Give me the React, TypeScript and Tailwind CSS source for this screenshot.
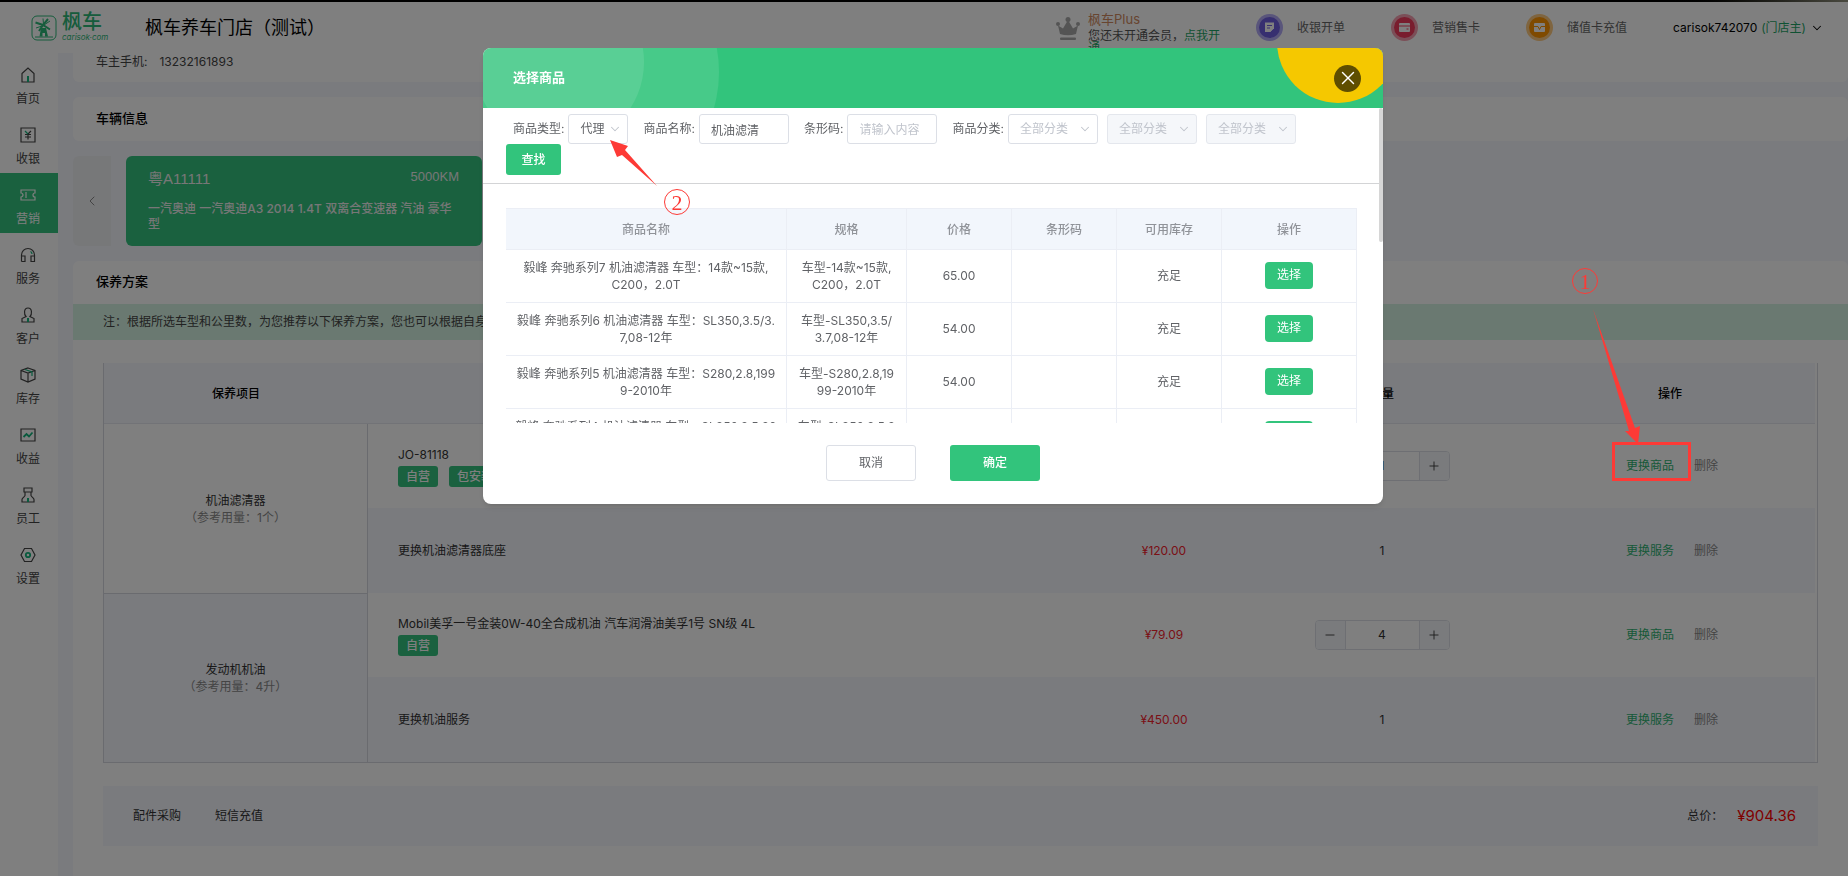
import React, { useState } from 'react';
import { ChevronDown, ChevronLeft, Minus, Plus, X } from 'lucide-react';

interface MenuItem {
    label: string;
    icon: React.ReactNode;
    active?: boolean;
}

interface Product {
    name: string;
    spec: string;
    price: string;
}

interface PlanLine {
    name: string;
    tags?: string[];
    price: string;
    qty: number;
    kind: 'goods' | 'service';
}

interface PlanGroup {
    title: string;
    usage: string;
    lines: PlanLine[];
}

const ACCENT = '#12b57c';

const MENU: MenuItem[] = [
    {
        label: '首页',
        icon: (
            <>
                <path d="M2 6.5 8 1l6 5.5V15H2z" />
                <path d="M8 9v6" stroke={ACCENT} strokeWidth="2" />
            </>
        ),
    },
    {
        label: '收银',
        icon: (
            <>
                <path d="M1 1h14v14H1z" />
                <path d="M8 7v5.500M5 7.500h6M5 10h6M11 4 8 7" />
                <path d="M5 4l3 3" stroke={ACCENT} />
            </>
        ),
    },
    {
        label: '营销',
        active: true,
        icon: <path d="M1 3h14v3a2 2 0 0 0 0 4v3H1v-3a2 2 0 0 0 0-4zM6 5v6" />,
    },
    {
        label: '服务',
        icon: (
            <>
                <path d="M1.500 14.500V8a6.500 6.500 0 0 1 13 0v6.500h-3.500V9h3.500M1.500 9H5v5.500H1.500" />
                <path d="M10.500 4.500a3 3 0 0 1 1.500 2.500" stroke={ACCENT} />
            </>
        ),
    },
    {
        label: '客户',
        icon: (
            <>
                <path d="M6 9.500C4 7.500 3.500 1 8 1s4 6.500 2 8.500l4 2V15H2v-3.500z" />
                <path d="M8 11v4" stroke={ACCENT} strokeWidth="2" />
            </>
        ),
    },
    {
        label: '库存',
        icon: (
            <>
                <path d="M8 1l7 2.500v8.500L8 15l-7-3V3.500zM1 3.500 8 6l7-2.500M8 6v9" />
                <path d="M5 2.500l7 2.500v4" stroke={ACCENT} />
            </>
        ),
    },
    {
        label: '收益',
        icon: (
            <>
                <path d="M1 2h14v12H1z" />
                <path d="M3.500 10 6.500 7l2.500 2.500 3.500-4" stroke={ACCENT} strokeWidth="1.800" />
            </>
        ),
    },
    {
        label: '员工',
        icon: (
            <>
                <path d="M4 1h8v4H4zM5 5v3.500c0 1-3 2.500-3 4V15h12v-2.500c0-1.500-3-3-3-4V5" />
                <path d="M8 11v4" stroke={ACCENT} strokeWidth="2" />
            </>
        ),
    },
    {
        label: '设置',
        icon: (
            <>
                <path d="M4.500 1.500h7L15 8l-3.500 6.500h-7L1 8z" />
                <circle cx="8" cy="8" r="2.200" stroke={ACCENT} strokeWidth="1.800" />
            </>
        ),
    },
];

const PRODUCTS: Product[] = [
    { name: '毅峰 奔驰系列7 机油滤清器 车型：14款~15款,\nC200，2.0T', spec: '车型-14款~15款,\nC200，2.0T', price: '65.00' },
    { name: '毅峰 奔驰系列6 机油滤清器 车型：SL350,3.5/3.\n7,08-12年', spec: '车型-SL350,3.5/\n3.7,08-12年', price: '54.00' },
    { name: '毅峰 奔驰系列5 机油滤清器 车型：S280,2.8,199\n9-2010年', spec: '车型-S280,2.8,19\n99-2010年', price: '54.00' },
    { name: '毅峰 奔驰系列4 机油滤清器 车型：SL350,3.5,20\n03-2006年', spec: '车型-SL350,3.5,2\n003-2006年', price: '54.00' },
];

const PLAN: PlanGroup[] = [
    {
        title: '机油滤清器',
        usage: '（参考用量：1个）',
        lines: [
            { name: 'JO-81118', tags: ['自营', '包安装'], price: '¥28.00', qty: 1, kind: 'goods' },
            { name: '更换机油滤清器底座', price: '¥120.00', qty: 1, kind: 'service' },
        ],
    },
    {
        title: '发动机机油',
        usage: '（参考用量：4升）',
        lines: [
            { name: 'Mobil美孚一号金装0W-40全合成机油 汽车润滑油美孚1号 SN级 4L', tags: ['自营'], price: '¥79.09', qty: 4, kind: 'goods' },
            { name: '更换机油服务', price: '¥450.00', qty: 1, kind: 'service' },
        ],
    },
];

const Logo = () => (
    <a href="#home" className="flex w-[74px] items-center gap-[5px] text-[#2db878]" aria-label="枫车">
        <svg viewBox="0 0 26 26" className="h-[26px] w-[26px] shrink-0" fill="none" stroke="currentColor">
            <rect x="1" y="1" width="24" height="24" rx="5" />
            <path d="M4.500 7.500 12 10l7 4.500M8 16l4-6 5-6" strokeWidth="2" />
            <path d="M12 3.500 12.500 9M19 6l-6 4M5 13l6-2" strokeWidth="1" />
            <path d="M10 13h5l2 8.500h-3V18h-2.500v3.500H8.500z" fill="currentColor" stroke="none" />
            <path d="M4 22h18" />
        </svg>
        <span className="flex flex-col gap-0.5">
            <span className="flex gap-0.5 text-[20px] leading-[18px] font-medium">枫车</span>
            <span className="text-[8px] leading-[9px] italic">carisok·com</span>
        </span>
    </a>
);

const QuickLink = ({ label, color, ring, children }: { label: string; color: string; ring: string; children: React.ReactNode }) => (
    <a href="#quick" className="flex items-center gap-3.5 text-[#666]">
        <svg viewBox="0 0 27 27" className="h-[27px] w-[27px]">
            <circle cx="13.500" cy="13.500" r="13.500" fill={ring} />
            <circle cx="13.500" cy="13.500" r="10.500" fill={color} />
            {children}
        </svg>
        <span>{label}</span>
    </a>
);

const Header = () => (
    <header className="flex h-[53px] shrink-0 items-center bg-white pt-0.5 pr-6 pl-[31px]">
        <Logo />
        <h1 className="ml-10 text-[18px] text-black">枫车养车门店（测试）</h1>
        <div className="ml-auto flex items-center gap-[46px]">
            <div className="-mr-3 flex h-9 items-start gap-2">
                <svg viewBox="0 0 24 24" className="mt-[7px] h-6 w-6" fill="#a9a9a9">
                    <path d="M4 17 2 8.500l5 3L12 3l5 8.500 5-3L20 17q-8 2.500-16 0z" />
                    <circle cx="2" cy="7" r="2" />
                    <circle cx="12" cy="2.500" r="2.500" />
                    <circle cx="22" cy="7" r="2" />
                    <rect x="4" y="20.500" width="16" height="2.500" rx="1" />
                </svg>
                <div className="w-[134px]">
                    <p className="text-[13px] leading-[18px] text-[#d08a60]">枫车Plus</p>
                    <p className="pt-0.5 leading-3 text-[#555]">
                        您还未开通会员，
                        <a href="#open" className="text-[#1fa567]">点我开通</a>
                    </p>
                </div>
            </div>
            <QuickLink label="收银开单" color="#6f5fe0" ring="#b3aaf7">
                <path d="M9 8.500h9v6L14.500 18H9z" fill="#fff" />
                <path d="M11 11.500h5M11 14h3M14.500 18.500l4-4" stroke="#6f5fe0" />
            </QuickLink>
            <QuickLink label="营销售卡" color="#f23a5c" ring="#f79fb0">
                <rect x="8" y="9" width="11" height="9" rx="1" fill="#fff" />
                <path d="M8 12h11M15.500 15h2" stroke="#f23a5c" />
            </QuickLink>
            <QuickLink label="储值卡充值" color="#ff9400" ring="#ffca80">
                <rect x="8" y="9" width="11" height="9" rx="1" fill="#fff" />
                <path d="M8 12.500h4l1.500 3 1.500-3h4" stroke="#ff9400" fill="none" />
            </QuickLink>
            <button type="button" className="flex items-center gap-1 text-black">
                carisok742070
                <span className="text-[#1fa567]">(门店主)</span>
                <ChevronDown className="h-3.5 w-3.5" strokeWidth={1.8} />
            </button>
        </div>
    </header>
);

const Sidebar = () => (
    <nav className="w-[58px] shrink-0 bg-white">
        {MENU.map((item) => (
            <a
                key={item.label}
                href={`#${item.label}`}
                className={`flex h-[60px] flex-col items-center gap-1.5 pt-3.5 pr-0.5 ${item.active ? 'bg-[#34c27e] text-white' : 'text-[#444]'}`}
            >
                <svg viewBox="0 0 16 16" className="h-4 w-4" fill="none" stroke="currentColor" strokeWidth="1.200">
                    {item.icon}
                </svg>
                <span className="leading-5">{item.label}</span>
            </a>
        ))}
    </nav>
);

const Stepper = ({ initial, label }: { initial: number; label: string }) => {
    const [value, setValue] = useState(initial);
    return (
        <div className="mx-auto flex h-[30px] w-[135px] overflow-hidden rounded border border-[#dcdfe6]">
            <button type="button" aria-label="减少" onClick={() => setValue(Math.max(1, value - 1))} className="flex w-[30px] items-center justify-center border-r border-[#dcdfe6] bg-[#f5f7fa]">
                <Minus className="h-3.5 w-3.5" strokeWidth={1.5} />
            </button>
            <input
                aria-label={label}
                value={value}
                onChange={(e) => setValue(Number(e.target.value) || 1)}
                className="min-w-0 flex-1 text-center text-[#333] outline-none"
            />
            <button type="button" aria-label="增加" onClick={() => setValue(value + 1)} className="flex w-[30px] items-center justify-center border-l border-[#dcdfe6] bg-[#f5f7fa]">
                <Plus className="h-3.5 w-3.5" strokeWidth={1.5} />
            </button>
        </div>
    );
};

const PlanTable = () => (
    <div className="border-x border-b border-[#d4d6de] pr-0.5">
        <table className="w-full table-fixed border-separate border-spacing-0">
            <colgroup>
                <col className="w-[264px]" />
                <col />
                <col className="w-[150px]" />
                <col className="w-[286px]" />
                <col className="w-[290px]" />
            </colgroup>
            <thead>
                <tr className="h-[61px] bg-[#f4f6fd] text-black">
                    {['保养项目', '商品/服务', '价格', '数量', '操作'].map((h) => (
                        <th key={h} className="border-b border-[#e4e7ef] pt-0.5 font-medium">{h}</th>
                    ))}
                </tr>
            </thead>
            <tbody>
                {PLAN.map((group, g) =>
                    group.lines.map((line, i) => (
                        <tr key={line.name} className={i === 0 ? 'h-[84px]' : 'h-[85px] bg-[#f4f6fd]'}>
                            {i === 0 && (
                                <td rowSpan={2} className={`border-r border-[#d4d6de] text-center leading-[17px] ${g === 1 ? 'border-t bg-[#f4f6fd]' : 'bg-white'}`}>
                                    <p>{group.title}</p>
                                    <p className="text-[#888]">{group.usage}</p>
                                </td>
                            )}
                            <td className="pl-[30px]">
                                <p className="leading-[17px]">{line.name}</p>
                                {line.tags && (
                                    <div className="mt-[3px] flex gap-[11px]">
                                        {line.tags.map((tag) => (
                                            <span key={tag} className="rounded-[3px] bg-[#34c27e] px-2 leading-[21px] font-medium text-white">{tag}</span>
                                        ))}
                                    </div>
                                )}
                            </td>
                            <td className="text-center text-[#f5222d]">{line.price}</td>
                            <td className="text-center">
                                {line.kind === 'goods' ? <Stepper initial={line.qty} label={`${group.title}数量`} /> : line.qty}
                            </td>
                            <td className="pl-1 text-center">
                                <button type="button" className="mr-5 text-[#2fb272]">{line.kind === 'goods' ? '更换商品' : '更换服务'}</button>
                                <button type="button" className="text-[#888]">删除</button>
                            </td>
                        </tr>
                    )),
                )}
            </tbody>
        </table>
    </div>
);

const Content = () => (
    <main className="flex min-w-0 flex-1 flex-col gap-[15px] bg-[#f4f6fd] pl-[15px]">
        <section className="flex h-[29px] items-center gap-3 rounded-b-md bg-white px-[23px] pb-3 text-[#444]">
            <span>车主手机:</span>
            <span>13232161893</span>
        </section>

        <section className="rounded-md bg-white px-[23px] pb-0.5">
            <h2 className="text-[13px] leading-[42px] font-medium text-black">车辆信息</h2>
        </section>

        <section className="flex h-[90px] shrink-0 gap-[15px]">
            <button type="button" aria-label="上一辆" className="flex w-[38px] items-center justify-center rounded-l-md bg-[#eff0f3] text-[#888]">
                <ChevronLeft className="h-4 w-4" strokeWidth={1.5} />
            </button>
            <article className="w-[356px] rounded-md bg-[#34c27e] pt-3 pr-[23px] pl-[22px] text-[#eee]">
                <div className="flex justify-between font-['Liberation_Sans','Noto_Sans_CJK_SC',sans-serif]">
                    <span className="text-[15px] leading-[22px]">粤A11111</span>
                    <span className="text-[13px] leading-[18px]">5000KM</span>
                </div>
                <p className="-mr-1 mt-[11px] leading-[15px] font-medium">一汽奥迪 一汽奥迪A3 2014 1.4T 双离合变速器 汽油 豪华型</p>
            </article>
        </section>

        <section className="flex-1 rounded-t-md bg-white">
            <h2 className="px-[23px] pb-0.5 text-[13px] leading-[41px] font-medium text-black">保养方案</h2>
            <p className="bg-[#d5f3e3] px-[30px] leading-9 text-[#444]">
                注：根据所选车型和公里数，为您推荐以下保养方案，您也可以根据自身需求更换商品和服务。
            </p>
            <div className="px-[30px] pt-[23px]">
                <PlanTable />
                <footer className="mt-[23px] flex h-[60px] items-center bg-[#f4f6fd] pr-[22px] pl-[30px]">
                    <a href="#parts" className="mr-[34px]">配件采购</a>
                    <a href="#sms">短信充值</a>
                    <span className="ml-auto mr-3.5">总价：</span>
                    <strong className="text-[15px] font-normal text-[#f00]">¥904.36</strong>
                </footer>
            </div>
        </section>
    </main>
);

const Field = ({ id, label, children }: { id: string; label: string; children: React.ReactNode }) => (
    <div className="flex items-center gap-1">
        <label htmlFor={id}>{label}:</label>
        {children}
    </div>
);

const SelectBox = ({ id, option, className, disabled, filled }: { id: string; option: string; className: string; disabled?: boolean; filled?: boolean }) => (
    <div className={`relative ${className}`}>
        <select
            id={id}
            aria-label={option}
            disabled={disabled}
            className={`h-[30px] w-full appearance-none rounded-[3px] border pl-[11px] opacity-100 outline-none ${disabled ? 'border-[#e4e7ed] bg-[#f5f7fa]' : 'border-[#dcdfe6] bg-white'} ${filled ? 'text-[#606266]' : 'text-[#c0c4cc]'}`}
        >
            <option>{option}</option>
        </select>
        <ChevronDown className="pointer-events-none absolute top-2 right-1.5 h-3.5 w-3.5 text-[#c0c4cc]" strokeWidth={1.8} />
    </div>
);

const ProductDialog = () => {
    const [name, setName] = useState('机油滤清');
    const [code, setCode] = useState('');
    const inputClass = 'h-[30px] w-[90px] rounded-[3px] border border-[#dcdfe6] px-[11px] outline-none placeholder:text-[#c0c4cc]';

    return (
        <div role="dialog" aria-label="选择商品" className="w-[900px] overflow-hidden rounded-lg bg-white text-[#606266] shadow-md">
            <div className="relative flex h-[60px] items-center overflow-hidden bg-[#32c47c] pl-[30px]">
                <span className="absolute -top-[106px] -left-[24px] h-[260px] w-[260px] rounded-full bg-white/10" />
                <span className="absolute -top-[71px] -left-[9px] h-[170px] w-[170px] rounded-full bg-white/10" />
                <span className="absolute -top-[67px] -right-[16px] h-[122px] w-[122px] rounded-full bg-[#f5c800]" />
                <h2 className="relative text-[13px] font-bold text-white">选择商品</h2>
                <button type="button" aria-label="关闭" className="relative mr-[22px] ml-auto flex h-[27px] w-[27px] items-center justify-center rounded-full bg-[#5f4e00] text-white">
                    <X className="h-[22px] w-[22px]" strokeWidth={1.5} />
                </button>
            </div>

            <div className="relative h-[315px] overflow-hidden">
                <span className="absolute top-0 right-0 h-[134px] w-1 rounded-full bg-[#d6d6d6]" />
                <form className="mr-1 border-b border-[#d3d4d6] pt-1.5 pb-2" onSubmit={(e) => e.preventDefault()}>
                    <div className="flex items-center gap-[15px] pl-[30px]">
                        <Field id="type" label="商品类型">
                            <SelectBox id="type" option="代理" className="w-[60px]" filled />
                        </Field>
                        <Field id="name" label="商品名称">
                            <input id="name" value={name} onChange={(e) => setName(e.target.value)} className={inputClass} />
                        </Field>
                        <Field id="code" label="条形码">
                            <input id="code" value={code} onChange={(e) => setCode(e.target.value)} placeholder="请输入内容" className={inputClass} />
                        </Field>
                        <div className="flex items-center gap-[9px]">
                            <Field id="category" label="商品分类">
                                <SelectBox id="category" option="全部分类" className="w-[90px]" />
                            </Field>
                            <SelectBox id="category2" option="全部分类" className="w-[90px]" disabled />
                            <SelectBox id="category3" option="全部分类" className="w-[90px]" disabled />
                        </div>
                    </div>
                    <button type="submit" className="ml-[23px] block h-[31px] w-[55px] rounded-[3px] bg-[#32c47c] font-medium text-white">查找</button>
                </form>

                <div className="px-[23px] pt-6">
                    <table className="w-[851px] table-fixed border-separate border-spacing-0 border-t border-[#ebeef5] text-center">
                        <colgroup>
                            <col className="w-[281px]" />
                            <col className="w-[120px]" />
                            <col className="w-[105px]" />
                            <col className="w-[105px]" />
                            <col className="w-[105px]" />
                            <col className="w-[135px]" />
                        </colgroup>
                        <thead>
                            <tr className="h-[41px] bg-[#f2f6fc] text-[#909399]">
                                {['商品名称', '规格', '价格', '条形码', '可用库存', '操作'].map((h) => (
                                    <th key={h} className="border-r border-b border-[#ebeef5] pt-0.5 font-medium">{h}</th>
                                ))}
                            </tr>
                        </thead>
                        <tbody>
                            {PRODUCTS.map((p) => (
                                <tr key={p.name} className="h-[53px] *:border-r *:border-b *:border-[#ebeef5]">
                                    <td className="whitespace-pre leading-[17px]">{p.name}</td>
                                    <td className="whitespace-pre leading-[17px]">{p.spec}</td>
                                    <td>{p.price}</td>
                                    <td />
                                    <td>充足</td>
                                    <td className="pb-0.5">
                                        <button type="button" className="h-[27px] w-12 rounded-sm bg-[#32c47c] text-white">选择</button>
                                    </td>
                                </tr>
                            ))}
                        </tbody>
                    </table>
                </div>
            </div>

            <div className="flex justify-center gap-[34px] pt-[22px] pb-[23px]">
                <button type="button" className="h-9 w-[90px] rounded-[3px] border border-[#dcdfe6]">取消</button>
                <button type="button" className="h-9 w-[90px] rounded-[3px] bg-[#32c47c] font-medium text-white">确定</button>
            </div>
        </div>
    );
};

// numbered hints drawn over the whole screen
const Hints = () => (
    <div className="pointer-events-none fixed inset-0 z-30 text-[#fd3a36]">
        <svg className="absolute inset-0 h-full w-full" fill="currentColor">
            <path d="M610 140l18 6-3 4 32 36-35-31-5 2z" />
            <path d="M1593 309l42 119 5-2-2 18-13-13 4 0z" />
            <rect x="1613.500" y="443.500" width="76" height="36" fill="none" stroke="currentColor" strokeWidth="3" />
        </svg>
        <span className="absolute top-[189px] left-[664px] flex h-[26px] w-[26px] items-center justify-center rounded-full border border-current font-['Liberation_Serif',serif] text-[22px]">2</span>
        <span className="absolute top-[268px] left-[1572px] flex h-[26px] w-[26px] items-center justify-center rounded-full border border-current font-['Liberation_Serif',serif] text-[22px]">1</span>
    </div>
);

const App: React.FC = () => (
    <div className="flex h-screen flex-col overflow-hidden font-['Inter','Noto_Sans_CJK_SC',sans-serif] text-[12px] text-[#333]">
        <Header />
        <div className="flex min-h-0 flex-1">
            <Sidebar />
            <Content />
        </div>

        {/* overlay */}
        <div className="fixed inset-0 z-10 flex items-start justify-center bg-black/50 pt-12 pl-[18px]">
            <ProductDialog />
        </div>
        <div className="fixed inset-x-0 top-0 z-20 h-0.5 bg-linear-to-r from-black from-90% to-[#4a4a40]" />
        <Hints />
    </div>
);

export default App;
